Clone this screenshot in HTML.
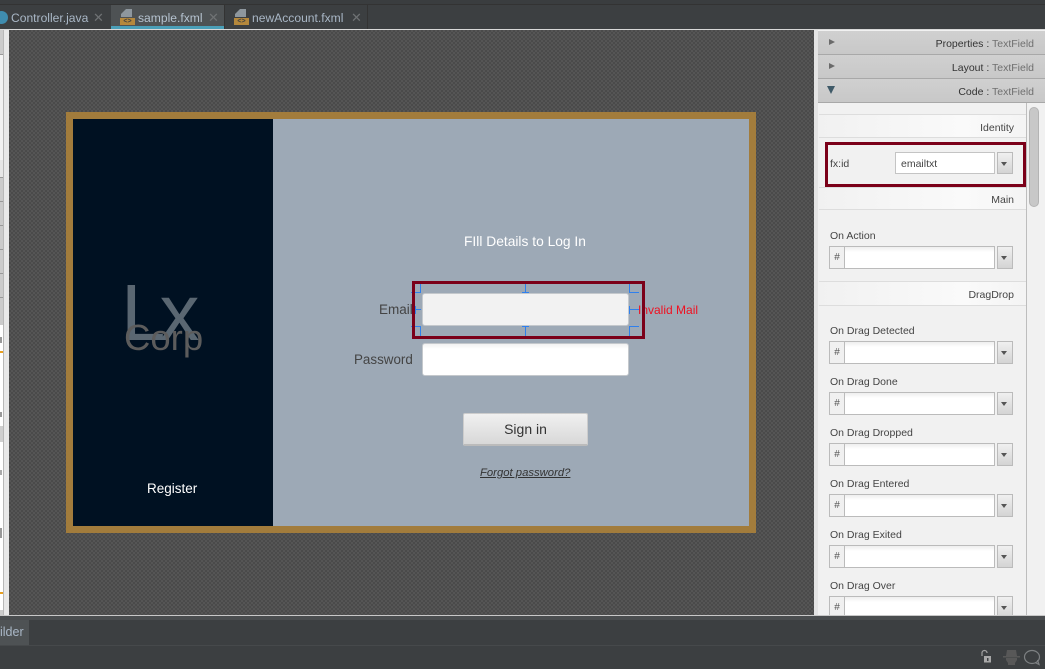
<!DOCTYPE html>
<html><head><meta charset="utf-8"><style>
html,body{margin:0;padding:0}
body{width:1045px;height:669px;overflow:hidden;position:relative;background:#3c3f41;font-family:"Liberation Sans",sans-serif}
div,span{position:absolute;box-sizing:border-box}
.t{white-space:nowrap;line-height:16px;height:16px}
.tab{color:#a9b7c6;font-size:12.1px;top:10px}
.x{color:#6f7274;font-size:13px;top:10px}
.hd{left:818px;width:227px;height:24px;background:linear-gradient(#d0d0d0,#c8c8c8);border-bottom:1px solid #a8a8a8}
.hr{font-size:10.5px;color:#333;right:11px;top:5px}
.hr span{position:static;color:#6f6f6f}
.tri{left:11px;width:0;height:0;border-left:6px solid #6a6a6a;border-top:3px solid transparent;border-bottom:3px solid transparent}
.sec{left:819px;width:207px;background:linear-gradient(90deg,#f1f1f1,#fafafa 70%,#f4f4f4);border-top:1px solid #ddd;border-bottom:1px solid #ddd}
.sec .t{right:12px;top:5px;font-size:10.5px;color:#444}
.l{left:830px;font-size:10.5px;color:#444}
.h{left:829px;width:16px;height:23px;background:#f0f0f0;border:1px solid #bbb;color:#555;font-size:10px;text-align:center;line-height:22px}
.f{left:844px;width:151px;height:23px;background:linear-gradient(#eee,#fff 5px);border:1px solid #bbb}
.b{left:997px;width:16px;height:23px;background:linear-gradient(#f0f0f0,#d4d4d4);border:1px solid #bbb}
.b:after{content:"";position:absolute;left:3px;top:9px;border-top:4px solid #555;border-left:3.5px solid transparent;border-right:3.5px solid transparent}
.m{background:#2f80ed}
.ln{left:0;width:3px;height:1px;background:#999}
.ic{width:15px;height:7px;background:#b5883c;color:#3c3f41;font-size:7px;font-weight:bold;line-height:7px;text-align:center;white-space:nowrap}
.pg{width:11px;height:8px;background:#8e979e;clip-path:polygon(5px 0,100% 0,100% 100%,0 100%,0 5px)}
</style></head><body>
<div style="left:0;top:0;width:1045px;height:4px;background:#3a3d3f"></div>
<div style="left:0;top:4px;width:1045px;height:25px;background:#3c3f41;border-top:1px solid #333"></div>
<div style="left:-5px;top:11px;width:13px;height:13px;border-radius:50%;background:#3f8cae"></div>
<div class="t tab" style="left:11px">Controller.java</div><div class="t x" style="left:93px">✕</div>
<div style="left:111px;top:5px;width:113px;height:24px;background:#4e5254"></div>
<div style="left:111px;top:26px;width:113px;height:3px;background:#4a9fb8"></div>
<div class="pg" style="left:121px;top:9px"></div>
<div class="ic" style="left:120px;top:18px">&lt;&gt;</div>
<div class="t tab" style="left:138px;color:#b5c2cf">sample.fxml</div><div class="t x" style="left:208px">✕</div>
<div style="left:224px;top:5px;width:1px;height:24px;background:#333"></div>
<div class="pg" style="left:235px;top:9px"></div>
<div class="ic" style="left:234px;top:18px">&lt;&gt;</div>
<div class="t tab" style="left:252px">newAccount.fxml</div><div class="t x" style="left:351px">✕</div>
<div style="left:367px;top:5px;width:1px;height:24px;background:#333"></div>
<div style="left:0;top:29px;width:1045px;height:1px;background:#d8d8d8"></div>

<div style="left:0;top:30px;width:3px;height:585px;background:#cbcbcb"></div>
<div style="left:0;top:54px;width:3px;height:106px;background:#f2f2f2"></div>
<div style="left:0;top:160px;width:3px;height:17px;background:#e6e6e6"></div>
<div class="ln" style="top:54px"></div><div class="ln" style="top:177px"></div><div class="ln" style="top:201px"></div><div class="ln" style="top:225px"></div><div class="ln" style="top:249px"></div><div class="ln" style="top:273px"></div><div class="ln" style="top:297px"></div>
<div style="left:0;top:325px;width:3px;height:285px;background:#fff"></div>
<div style="left:0;top:351px;width:3px;height:2px;background:#e8a020"></div>
<div style="left:0;top:592px;width:3px;height:2px;background:#e8a020"></div>
<div style="left:0;top:426px;width:3px;height:16px;background:#cfcfcf"></div>
<div style="left:0;top:337px;width:2px;height:6px;background:#999"></div>
<div style="left:0;top:412px;width:2px;height:5px;background:#999"></div>
<div style="left:0;top:470px;width:2px;height:5px;background:#aaa"></div>
<div style="left:0;top:528px;width:2px;height:10px;background:#999"></div>
<div style="left:3px;top:30px;width:1px;height:585px;background:#b8b8b8"></div>
<div style="left:4px;top:30px;width:5px;height:585px;background:#e8e8e8"></div>

<div style="left:9px;top:30px;width:805px;height:585px;background-color:#4f4f4f;background-image:repeating-conic-gradient(#555 0 25%,#4a4a4a 0 50%);background-size:4px 4px"></div>
<div style="left:814px;top:30px;width:4px;height:585px;background:#e4e4e4"></div>

<div style="left:66px;top:112px;width:690px;height:421px;background:#a27c3c"></div>
<div style="left:73px;top:119px;width:200px;height:407px;background:#001122"></div>
<div style="left:273px;top:119px;width:476px;height:407px;background:#9da9b6"></div>
<div class="t" style="left:121px;top:273px;font-size:80px;line-height:80px;height:80px;letter-spacing:-6px;color:#5a6772">Lx</div>
<div class="t" style="left:124px;top:318px;font-size:36.5px;line-height:40px;height:40px;color:#5c5c5c">Corp</div>
<div class="t" style="left:147px;top:481px;font-size:13.5px;color:#fff">Register</div>
<div class="t" style="left:464px;top:234px;font-size:13.8px;color:#fff">FIll Details to Log In</div>
<div class="t" style="left:379px;top:302px;font-size:13.5px;color:#444">Email</div>
<div class="t" style="left:354px;top:352px;font-size:13.4px;color:#444">Password</div>
<div style="left:421.500px;top:293px;width:207px;height:33px;background:#f2f2f2;border:1px solid #c4c8cc;border-radius:3px"></div>
<div style="left:421.500px;top:343px;width:207px;height:33px;background:linear-gradient(#f2f2f2,#fff 5px);border:1px solid #c4c8cc;border-radius:3px"></div>
<div style="left:463px;top:413px;width:125px;height:33px;background:linear-gradient(#f0f0f0,#d8d8d8);border:1px solid #ccc;border-bottom:2px solid #bbb;border-radius:2px"></div>
<div class="t" style="left:463px;width:125px;text-align:center;top:421px;font-size:14px;color:#333">Sign in</div>
<div class="t" style="left:480px;top:465px;font-size:11.3px;font-style:italic;text-decoration:underline;color:#333">Forgot password?</div>
<div class="t" style="left:638px;top:302px;font-size:12px;color:#f01020">Invalid Mail</div>

<div class="m" style="left:420px;top:283px;width:1px;height:10px"></div><div class="m" style="left:411px;top:292px;width:10px;height:1px"></div>
<div class="m" style="left:525px;top:283px;width:1px;height:9px"></div><div class="m" style="left:522px;top:292px;width:7px;height:1px"></div>
<div class="m" style="left:629px;top:283px;width:1px;height:10px"></div><div class="m" style="left:629px;top:292px;width:10px;height:1px"></div>
<div class="m" style="left:415px;top:306px;width:1px;height:8px"></div><div class="m" style="left:415px;top:309px;width:6px;height:1px"></div>
<div class="m" style="left:629px;top:309px;width:10px;height:1px"></div><div class="m" style="left:629px;top:306px;width:1px;height:8px"></div>
<div class="m" style="left:411px;top:326px;width:10px;height:1px"></div><div class="m" style="left:420px;top:326px;width:1px;height:10px"></div>
<div class="m" style="left:522px;top:326px;width:7px;height:1px"></div><div class="m" style="left:525px;top:326px;width:1px;height:10px"></div>
<div class="m" style="left:629px;top:326px;width:10px;height:1px"></div><div class="m" style="left:629px;top:326px;width:1px;height:10px"></div>
<div style="left:412px;top:281px;width:233px;height:58px;border:3px solid #7b0019"></div>

<div style="left:818px;top:30px;width:227px;height:585px;background:#f1f1f1"></div>
<div class="hd" style="top:31px"><div class="tri" style="top:8px"></div><div class="t hr">Properties : <span>TextField</span></div></div>
<div class="hd" style="top:55px"><div class="tri" style="top:8px"></div><div class="t hr">Layout : <span>TextField</span></div></div>
<div class="hd" style="top:79px"><div style="left:9px;top:7px;border-top:8px solid #3f5a68;border-left:4.500px solid transparent;border-right:4.500px solid transparent"></div><div class="t hr">Code : <span>TextField</span></div></div>
<div style="left:1026px;top:103px;width:1px;height:512px;background:#bdbdbd"></div>
<div style="left:1029px;top:107px;width:10px;height:100px;background:#c8c8c8;border:1px solid #b4b4b4;border-radius:5px"></div>

<div class="sec" style="top:114px;height:24px"><div class="t">Identity</div></div>
<div class="t l" style="top:156px">fx:id</div>
<div style="left:895px;top:152px;width:100px;height:22px;background:#fff;border:1px solid #c4c4c4"></div>
<div class="t" style="left:901px;top:156px;font-size:10.5px;color:#444">emailtxt</div>
<div class="b" style="top:152px;height:22px"></div>
<div style="left:825px;top:142px;width:201px;height:45px;border:3px solid #7b0019"></div>
<div class="sec" style="top:187px;height:23px"><div class="t" style="top:4px">Main</div></div>
<div class="t l" style="top:228px">On Action</div><div class="h" style="top:246px">#</div><div class="f" style="top:246px"></div><div class="b" style="top:246px"></div>
<div class="sec" style="top:281px;height:25px"><div class="t">DragDrop</div></div>
<div class="t l" style="top:323px">On Drag Detected</div><div class="h" style="top:341px">#</div><div class="f" style="top:341px"></div><div class="b" style="top:341px"></div>
<div class="t l" style="top:374px">On Drag Done</div><div class="h" style="top:392px">#</div><div class="f" style="top:392px"></div><div class="b" style="top:392px"></div>
<div class="t l" style="top:425px">On Drag Dropped</div><div class="h" style="top:443px">#</div><div class="f" style="top:443px"></div><div class="b" style="top:443px"></div>
<div class="t l" style="top:476px">On Drag Entered</div><div class="h" style="top:494px">#</div><div class="f" style="top:494px"></div><div class="b" style="top:494px"></div>
<div class="t l" style="top:527px">On Drag Exited</div><div class="h" style="top:545px">#</div><div class="f" style="top:545px"></div><div class="b" style="top:545px"></div>
<div class="t l" style="top:578px">On Drag Over</div><div class="h" style="top:596px">#</div><div class="f" style="top:596px"></div><div class="b" style="top:596px"></div>

<div style="left:0;top:615px;width:1045px;height:54px;background:#3c3f41"></div>
<div style="left:0;top:615px;width:1045px;height:1px;background:#c8c8c8"></div>
<div style="left:0;top:616px;width:1045px;height:4px;background:#4a4d4f"></div>
<div style="left:0;top:620px;width:29px;height:25px;background:#4e5254"></div>
<div class="t" style="left:0;top:624px;font-size:12.5px;color:#a9b7c6">ilder</div>
<div style="left:0;top:645px;width:1045px;height:1px;background:#46494b"></div>
<svg style="position:absolute;left:975px;top:645px" width="70" height="24" viewBox="0 0 70 24"><path d="M7 12V9a2.500 2.500 0 0 1 5 0" stroke="#a0a0a0" fill="none" stroke-width="1.200" transform="translate(0,-1)"/><rect x="9" y="11" width="7" height="6.500" fill="#a8a8a8"/><rect x="12" y="13" width="1.500" height="3" fill="#3c3f41"/><path d="M31 11l1-6h9l1 6zM28 11h17v1.500H28zM31 13h11v2l-2 3v2h-7v-2l-2-3z" fill="#585858"/><ellipse cx="57" cy="12" rx="7.500" ry="6.500" stroke="#7d8082" fill="none" stroke-width="1.200"/><path d="M60 17.500l4 2-1.500-4.500" stroke="#7d8082" fill="none" stroke-width="1.200"/></svg>
</body></html>
